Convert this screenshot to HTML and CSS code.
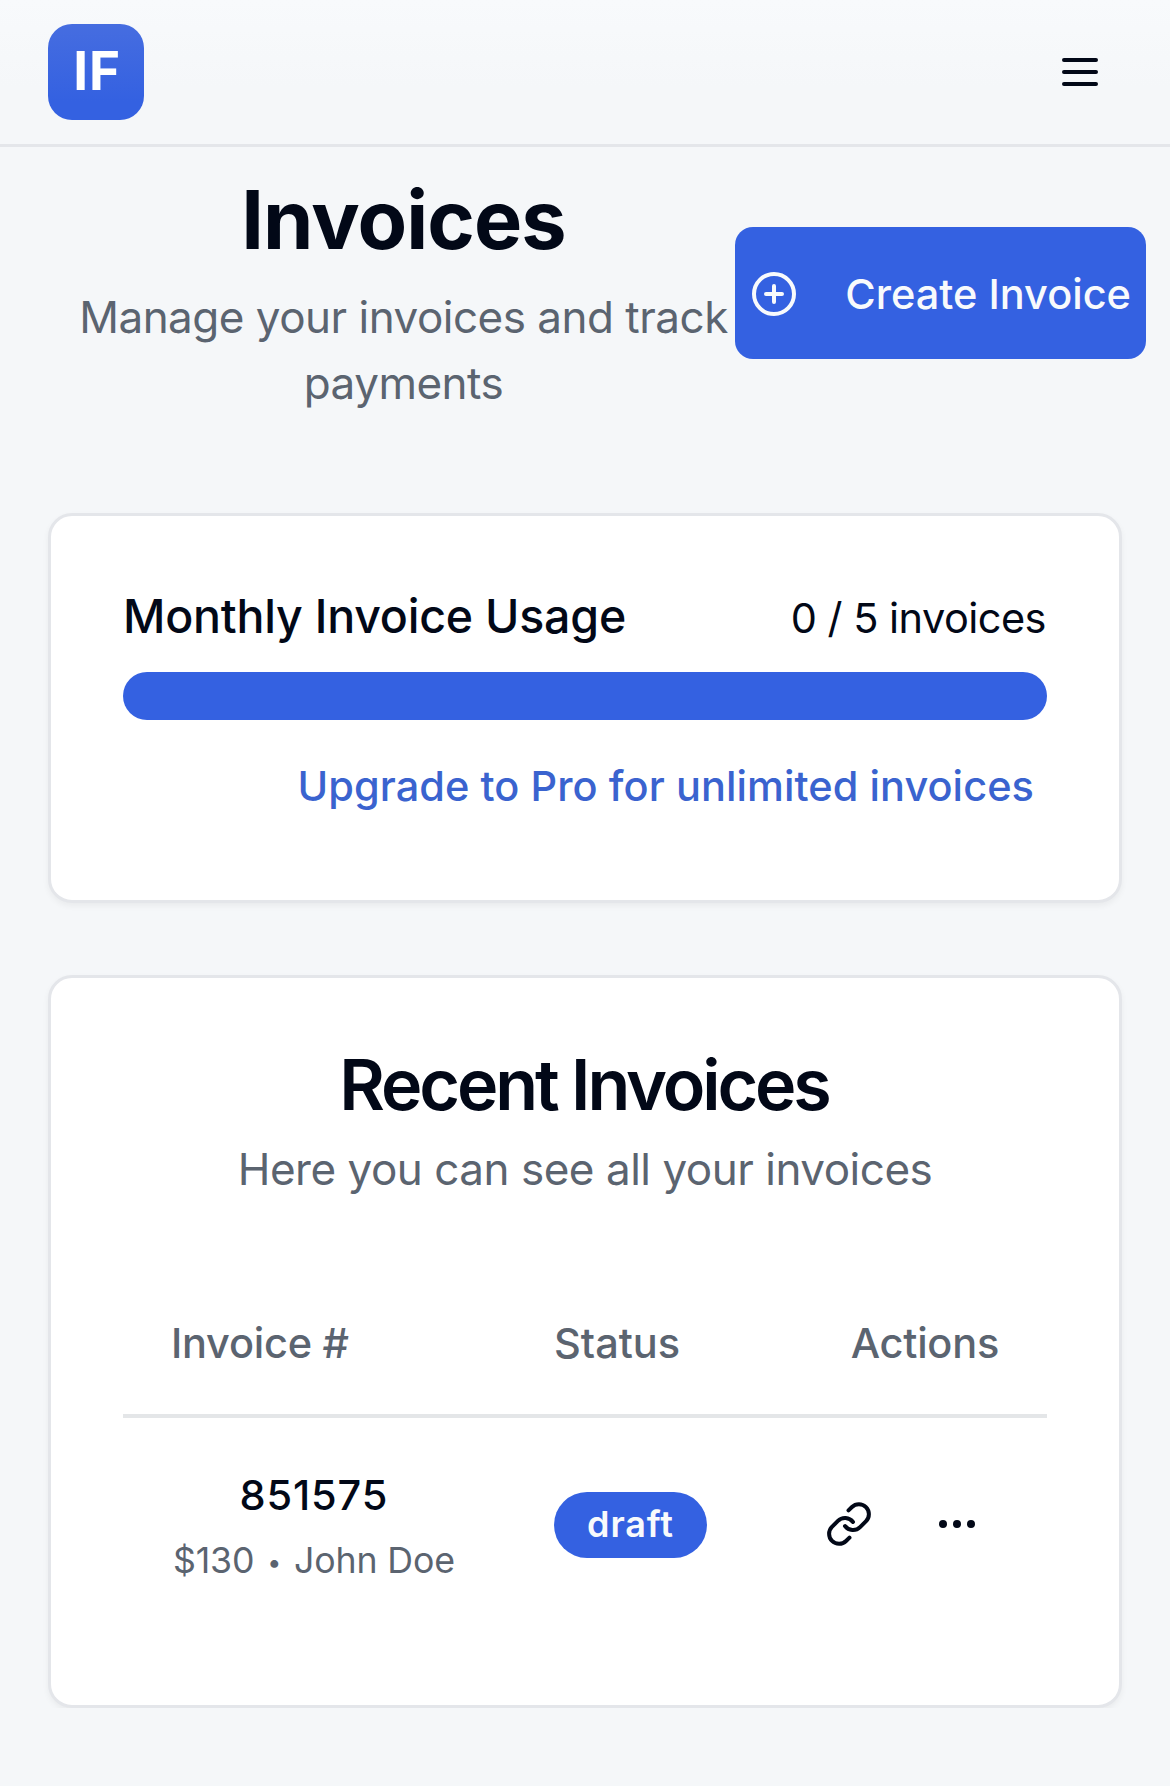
FILE: index.html
```html
<!DOCTYPE html>
<html lang="en">
<head>
    <meta charset="UTF-8">
    <meta name="viewport" content="width=device-width, initial-scale=1.0">
    <title>Invoices</title>
    <link rel="stylesheet" href="styles.css">
</head>

<body>
    <header>
        <a class="logo" href="#">IF</a>
        <button class="menu-button" aria-label="Menu">
            <svg class="icon" viewBox="0 0 24 24"><path d="M4 6h16M4 12h16M4 18h16"/></svg>
        </button>
    </header>

    <main>
        <div class="page-head">
            <div class="page-title">
                <h1>Invoices</h1>
                <p>Manage your invoices and track<br>payments</p>
            </div>
            <a class="create-button" href="#">
                <svg class="icon" viewBox="0 0 24 24"><circle cx="12" cy="12" r="10"/><path d="M8 12h8M12 8v8"/></svg>
                <span>Create Invoice</span>
            </a>
        </div>

        <section class="card usage">
            <div class="usage-head">
                <h2>Monthly Invoice Usage</h2>
                <span class="count">0 / 5 invoices</span>
            </div>
            <div class="bar"></div>
            <a class="upgrade" href="#">Upgrade to Pro for unlimited invoices</a>
        </section>

        <section class="card recent">
            <h2>Recent Invoices</h2>
            <p>Here you can see all your invoices</p>
            <table>
                <thead>
                    <tr>
                        <th class="col-invoice">Invoice #</th>
                        <th class="col-status">Status</th>
                        <th class="col-actions">Actions</th>
                    </tr>
                </thead>
                <tbody>
                    <tr>
                        <td>
                            <div class="invoice">
                                <div class="number">851575</div>
                                <div class="client">$130 <span class="dot">•</span> John Doe</div>
                            </div>
                        </td>
                        <td><span class="badge">draft</span></td>
                        <td>
                            <div class="actions">
                                <button aria-label="Copy link">
                                    <svg class="icon" viewBox="0 0 24 24"><path d="M10 13a5 5 0 0 0 7.54.54l3-3a5 5 0 0 0-7.07-7.07l-1.72 1.71"/><path d="M14 11a5 5 0 0 0-7.54-.54l-3 3a5 5 0 0 0 7.07 7.07l1.71-1.71"/></svg>
                                </button>
                                <button aria-label="More">
                                    <svg class="icon" viewBox="0 0 24 24"><circle cx="5" cy="12" r="1"/><circle cx="12" cy="12" r="1"/><circle cx="19" cy="12" r="1"/></svg>
                                </button>
                            </div>
                        </td>
                    </tr>
                </tbody>
            </table>
        </section>
    </main>
</body>
</html>
```
FILE: styles.css
```css
* {
    box-sizing: border-box;
}

body {
    margin: 0;
    font-family: Inter, "Liberation Sans", sans-serif;
    color: #020817;
    background-color: #f5f7f9;
}

h1, h2, p {
    margin: 0;
}

a {
    text-decoration: none;
}

button {
    display: flex;
    align-items: center;
    justify-content: center;
    padding: 0;
    border: 0;
    background: none;
    color: inherit;
}

.icon {
    display: block;
    flex: none;
    width: 48px;
    height: 48px;
    fill: none;
    stroke: currentColor;
    stroke-width: 2;
    stroke-linecap: round;
    stroke-linejoin: round;
}

header {
    display: flex;
    align-items: center;
    justify-content: space-between;
    height: 147px;
    padding: 0 42px 0 48px;
    border-bottom: 3px solid #e4e6ea;
    background: linear-gradient(#f8fafc, #f5f7f9 60%);
}

.logo {
    display: flex;
    align-items: center;
    justify-content: center;
    width: 96px;
    height: 96px;
    padding: 0 0 2px 2px;
    border-radius: 24px;
    background: linear-gradient(#466de0, #3461e1 80%);
    color: #fff;
    font-size: 53px;
    font-weight: 700;
    letter-spacing: 0.8px;
}

.menu-button {
    width: 96px;
    height: 96px;
}

.page-head {
    display: flex;
    align-items: center;
    padding: 25px 24px 0 72px;
}

.page-title {
    flex: 1;
    text-align: center;
    white-space: nowrap;
}

.page-title h1 {
    margin-bottom: 16px;
    font-size: 81px;
    font-weight: 700;
    line-height: 96px;
    letter-spacing: -0.9px;
}

.page-title p {
    font-size: 44px;
    line-height: 66px;
    letter-spacing: -0.5px;
    color: #5b6470;
}

.create-button {
    display: flex;
    align-items: center;
    justify-content: space-between;
    width: 411px;
    height: 132px;
    margin-bottom: 3px;
    padding: 2px 15px 0;
    border-radius: 18px;
    background: #3461e1;
    color: #f8fafc;
    font-size: 41.5px;
    font-weight: 500;
    white-space: nowrap;
}

.card {
    margin: 0 48px;
    padding: 72px;
    border: 3px solid #e4e6ea;
    border-radius: 24px;
    background: #fff;
    box-shadow: 0 3px 6px rgba(0, 0, 0, 0.05);
}

.usage {
    margin-top: 97px;
    padding-bottom: 84px;
}

.usage-head {
    display: flex;
    align-items: baseline;
    justify-content: space-between;
    height: 56px;
    margin-bottom: 28px;
    line-height: 56px;
    white-space: nowrap;
}

.usage-head h2 {
    font-size: 46.5px;
    font-weight: 500;
    letter-spacing: -0.22px;
}

.count {
    padding-right: 1px;
    font-size: 41.5px;
    letter-spacing: -0.53px;
}

.bar {
    height: 48px;
    border-radius: 24px;
    background: #3461e1;
}

.upgrade {
    display: block;
    margin-top: 36px;
    padding-right: 13px;
    font-size: 41.5px;
    font-weight: 500;
    line-height: 60px;
    letter-spacing: 0.06px;
    text-align: right;
    white-space: nowrap;
    color: #3a63cf;
}

.recent {
    margin-top: 72px;
    text-align: center;
}

.recent h2 {
    padding-right: 2px;
    font-size: 70px;
    font-weight: 600;
    line-height: 70px;
    letter-spacing: -3.1px;
}

.recent p {
    margin-top: 16px;
    font-size: 44px;
    line-height: 66px;
    letter-spacing: -0.48px;
    color: #5b6470;
}

table {
    width: 100%;
    margin-top: 70px;
    border-collapse: collapse;
    table-layout: fixed;
}

th, td {
    padding: 0 48px;
    text-align: left;
    white-space: nowrap;
}

th {
    height: 144px;
    border-bottom: 4px solid #e4e6e8;
    font-size: 41.5px;
    font-weight: 500;
    letter-spacing: -0.25px;
    color: #5b6470;
}

td {
    height: 217px;
}

.col-invoice {
    width: 383px;
}

.col-status {
    width: 250px;
    letter-spacing: 0;
}

.col-actions {
    padding-left: 0;
    text-align: right;
}

td:last-child {
    padding-left: 0;
}

.invoice {
    display: inline-block;
    padding-left: 2px;
    text-align: center;
}

.number {
    margin-bottom: 8px;
    font-size: 41.5px;
    font-weight: 500;
    line-height: 60px;
    letter-spacing: 0.85px;
}

.client {
    font-size: 35.7px;
    line-height: 54px;
    letter-spacing: -0.15px;
    color: #5b6470;
}

.dot {
    margin: 0 3px;
    font-size: 25px;
    line-height: 1;
    vertical-align: 2px;
}

.badge {
    display: block;
    width: 153px;
    height: 66px;
    margin-bottom: 2px;
    border-radius: 33px;
    background: #3461e1;
    color: #f8fafc;
    font-size: 36px;
    font-weight: 600;
    line-height: 65px;
    letter-spacing: 0.9px;
    text-align: center;
}

.actions {
    display: flex;
    justify-content: flex-end;
    gap: 24px;
    padding-bottom: 4px;
}

.actions button {
    width: 84px;
    height: 84px;
}
```
